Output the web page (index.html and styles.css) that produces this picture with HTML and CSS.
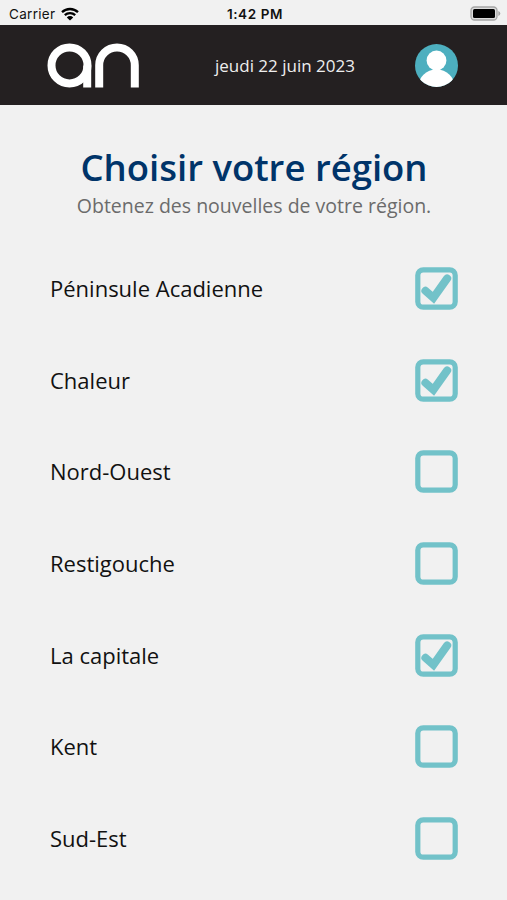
FILE: index.html
```html
<!DOCTYPE html>
<html lang="fr">
<head>
    <meta charset="UTF-8">
    <meta name="viewport" content="width=device-width, initial-scale=1.0">
    <title>Choisir votre région</title>
    <link rel="stylesheet" href="styles.css">
</head>
<body>
    <div class="status-bar">
        <div class="carrier">
            <span>Carrier</span>
            <svg class="wifi" viewBox="0 0 18 14" width="18" height="14">
                <path d="M1 5.2a11.6 11.6 0 0 1 16 0M3.8 8.2a7.6 7.6 0 0 1 10.4 0" fill="none" stroke="#000" stroke-width="2.3"/>
                <path d="M9 13.6L5.8 10.4a4.6 4.6 0 0 1 6.4 0z"/>
            </svg>
        </div>
        <span class="time">1:42 PM</span>
        <svg class="battery" viewBox="0 0 31 15" width="31" height="15">
            <rect x="1" y="1" width="26" height="13" rx="3.5" fill="#ddd" stroke="#a5a5a5" stroke-width="1.3"/>
            <rect x="3" y="3" width="22" height="9" rx="1.5"/>
            <path d="M28.3 5q2 .8 2 2.5t-2 2.5z" fill="#a5a5a5"/>
        </svg>
    </div>

    <header class="header">
        <svg class="logo" viewBox="0 0 92 45" width="92" height="45">
            <circle cx="22.5" cy="22.4" r="18" />
            <path d="M40.2 22.4V44.6M52.2 44.6V22.2a17.7 17.7 0 0 1 35.6 0V44.6"/>
        </svg>
        <span class="date">jeudi 22 juin 2023</span>
        <svg class="avatar" viewBox="0 0 43 43" width="43" height="43">
            <clipPath id="avatarClip"><circle cx="21.5" cy="21.5" r="21.5"/></clipPath>
            <g clip-path="url(#avatarClip)">
                <rect width="43" height="43" fill="#4dafbf"/>
                <circle cx="21.5" cy="16.5" r="9.9" fill="#fff"/>
                <ellipse cx="21.5" cy="43.5" rx="18.5" ry="18" fill="#fff"/>
            </g>
        </svg>
    </header>

    <main class="content">
        <h1>Choisir votre région</h1>
        <p class="subtitle">Obtenez des nouvelles de votre région.</p>
        <div class="region-list" id="regionList"></div>
    </main>

    <script>
        const regions = [
            { name: "Péninsule Acadienne", checked: true },
            { name: "Chaleur", checked: true },
            { name: "Nord-Ouest", checked: false },
            { name: "Restigouche", checked: false },
            { name: "La capitale", checked: true },
            { name: "Kent", checked: false },
            { name: "Sud-Est", checked: false }
        ];

        const regionList = document.getElementById('regionList');

        // Build one row per region
        function renderRegions() {
            regionList.innerHTML = '';

            regions.forEach(region => {
                const row = document.createElement('div');
                row.className = region.checked ? 'region checked' : 'region';
                row.innerHTML = `
                    <span class="region-name">${region.name}</span>
                    <svg class="checkbox" viewBox="0 0 43 43" width="43" height="43">
                        <rect x="2.8" y="2.8" width="37.4" height="37.4" rx="5.5"/>
                        <path class="tick" d="M10.4 23.8L18.4 30.8L32.2 11.4"/>
                    </svg>
                `;
                row.addEventListener('click', () => {
                    region.checked = !region.checked;
                    renderRegions();
                });
                regionList.appendChild(row);
            });
        }

        renderRegions();
    </script>
</body>
</html>
```
FILE: styles.css
```css
body {
    font-family: "Open Sans", sans-serif;
    margin: 0;
    height: 900px;
    overflow: hidden;
    background-color: #f1f1f1;
    color: #111;
}
.status-bar {
    display: grid;
    grid-template-columns: 1fr auto 1fr;
    align-items: center;
    height: 25px;
    padding: 2px 6px 0 9px;
    box-sizing: border-box;
    font-family: Inter, sans-serif;
    font-size: 13.5px;
}
.carrier {
    display: flex;
    align-items: center;
    gap: 6px;
    letter-spacing: 0.3px;
}
.time {
    font-weight: 600;
    letter-spacing: 0.6px;
}
.battery {
    justify-self: end;
}
.header {
    display: flex;
    align-items: center;
    height: 80px;
    padding: 0 49px 0 47px;
    box-sizing: border-box;
    background-color: #242021;
}
.logo {
    fill: none;
    stroke: #fff;
    stroke-width: 8;
}
.date {
    margin-left: 76px;
    color: #eee;
    font-size: 17px;
}
.avatar {
    margin-left: auto;
}
.content {
    padding: 38px 49px 0 50px;
}
h1 {
    margin: 0;
    color: #003469;
    font-size: 36.5px;
    font-weight: 600;
    line-height: 48px;
    text-align: center;
    white-space: nowrap;
}
.subtitle {
    margin: 0;
    color: #6b6b6b;
    font-size: 19.5px;
    line-height: 29px;
    text-align: center;
}
.region-list {
    margin-top: 23px;
}
.region {
    display: flex;
    align-items: center;
    justify-content: space-between;
    height: 91.6px;
    font-size: 22px;
    cursor: pointer;
}
.region-name {
    padding-bottom: 1px;
}
.checkbox {
    fill: none;
    stroke: #72c2c9;
    stroke-width: 5.2;
}
.tick {
    display: none;
    stroke-width: 8;
    stroke-linecap: round;
}
.checked .tick {
    display: block;
}
```
